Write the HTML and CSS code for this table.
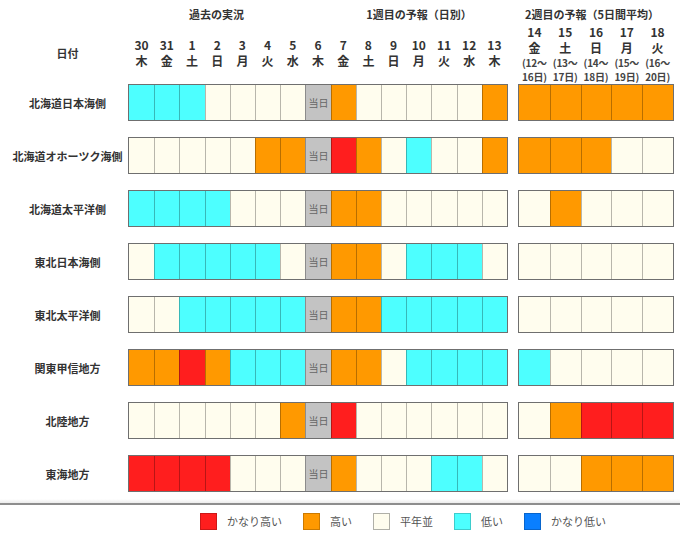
FILE: index.html
```html
<!DOCTYPE html>
<html lang="ja">
<head>
<meta charset="utf-8">
<link rel="stylesheet" href="styles.css">
</head>
<body>
<div class="chart">
  <div class="head">
    <div class="label head-label">日付</div>
    <div class="w1head">
      <div class="titles">
        <div class="t-past">過去の実況</div>
        <div class="t-w1">1週目の予報（日別）</div>
      </div>
      <div class="dates w1dates">
        <div class="d"><b>30</b><b>木</b></div>
        <div class="d"><b>31</b><b>金</b></div>
        <div class="d"><b>1</b><b>土</b></div>
        <div class="d"><b>2</b><b>日</b></div>
        <div class="d"><b>3</b><b>月</b></div>
        <div class="d"><b>4</b><b>火</b></div>
        <div class="d"><b>5</b><b>水</b></div>
        <div class="d"><b>6</b><b>木</b></div>
        <div class="d"><b>7</b><b>金</b></div>
        <div class="d"><b>8</b><b>土</b></div>
        <div class="d"><b>9</b><b>日</b></div>
        <div class="d"><b>10</b><b>月</b></div>
        <div class="d"><b>11</b><b>火</b></div>
        <div class="d"><b>12</b><b>水</b></div>
        <div class="d"><b>13</b><b>木</b></div>
      </div>
    </div>
    <div class="w2head">
      <div class="t-w2">2週目の予報（5日間平均）</div>
      <div class="dates w2dates">
        <div class="d"><b>14</b><b>金</b><span>(12～</span><span>16日)</span></div>
        <div class="d"><b>15</b><b>土</b><span>(13～</span><span>17日)</span></div>
        <div class="d"><b>16</b><b>日</b><span>(14～</span><span>18日)</span></div>
        <div class="d"><b>17</b><b>月</b><span>(15～</span><span>19日)</span></div>
        <div class="d"><b>18</b><b>火</b><span>(16～</span><span>20日)</span></div>
      </div>
    </div>
  </div>

  <div class="row">
    <div class="label">北海道日本海側</div>
    <div class="bar w1"><i class="c"></i><i class="c"></i><i class="c"></i><i class="n"></i><i class="n"></i><i class="n"></i><i class="n"></i><i class="t">当日</i><i class="o"></i><i class="n"></i><i class="n"></i><i class="n"></i><i class="n"></i><i class="n"></i><i class="o"></i></div>
    <div class="bar w2"><i class="o"></i><i class="o"></i><i class="o"></i><i class="o"></i><i class="o"></i></div>
  </div>
  <div class="row">
    <div class="label">北海道オホーツク海側</div>
    <div class="bar w1"><i class="n"></i><i class="n"></i><i class="n"></i><i class="n"></i><i class="n"></i><i class="o"></i><i class="o"></i><i class="t">当日</i><i class="r"></i><i class="o"></i><i class="n"></i><i class="c"></i><i class="n"></i><i class="n"></i><i class="o"></i></div>
    <div class="bar w2"><i class="o"></i><i class="o"></i><i class="o"></i><i class="n"></i><i class="n"></i></div>
  </div>
  <div class="row">
    <div class="label">北海道太平洋側</div>
    <div class="bar w1"><i class="c"></i><i class="c"></i><i class="c"></i><i class="c"></i><i class="n"></i><i class="n"></i><i class="n"></i><i class="t">当日</i><i class="o"></i><i class="o"></i><i class="n"></i><i class="n"></i><i class="n"></i><i class="n"></i><i class="n"></i></div>
    <div class="bar w2"><i class="n"></i><i class="o"></i><i class="n"></i><i class="n"></i><i class="n"></i></div>
  </div>
  <div class="row">
    <div class="label">東北日本海側</div>
    <div class="bar w1"><i class="n"></i><i class="c"></i><i class="c"></i><i class="c"></i><i class="c"></i><i class="c"></i><i class="n"></i><i class="t">当日</i><i class="o"></i><i class="o"></i><i class="n"></i><i class="c"></i><i class="c"></i><i class="c"></i><i class="n"></i></div>
    <div class="bar w2"><i class="n"></i><i class="n"></i><i class="n"></i><i class="n"></i><i class="n"></i></div>
  </div>
  <div class="row">
    <div class="label">東北太平洋側</div>
    <div class="bar w1"><i class="n"></i><i class="n"></i><i class="c"></i><i class="c"></i><i class="c"></i><i class="c"></i><i class="c"></i><i class="t">当日</i><i class="o"></i><i class="o"></i><i class="c"></i><i class="c"></i><i class="c"></i><i class="c"></i><i class="c"></i></div>
    <div class="bar w2"><i class="n"></i><i class="n"></i><i class="n"></i><i class="n"></i><i class="n"></i></div>
  </div>
  <div class="row">
    <div class="label">関東甲信地方</div>
    <div class="bar w1"><i class="o"></i><i class="o"></i><i class="r"></i><i class="o"></i><i class="c"></i><i class="c"></i><i class="c"></i><i class="t">当日</i><i class="o"></i><i class="o"></i><i class="n"></i><i class="c"></i><i class="c"></i><i class="c"></i><i class="c"></i></div>
    <div class="bar w2"><i class="c"></i><i class="n"></i><i class="n"></i><i class="n"></i><i class="n"></i></div>
  </div>
  <div class="row">
    <div class="label">北陸地方</div>
    <div class="bar w1"><i class="n"></i><i class="n"></i><i class="n"></i><i class="n"></i><i class="n"></i><i class="n"></i><i class="o"></i><i class="t">当日</i><i class="r"></i><i class="n"></i><i class="n"></i><i class="n"></i><i class="n"></i><i class="n"></i><i class="n"></i></div>
    <div class="bar w2"><i class="n"></i><i class="o"></i><i class="r"></i><i class="r"></i><i class="r"></i></div>
  </div>
  <div class="row">
    <div class="label">東海地方</div>
    <div class="bar w1"><i class="r"></i><i class="r"></i><i class="r"></i><i class="r"></i><i class="n"></i><i class="n"></i><i class="n"></i><i class="t">当日</i><i class="o"></i><i class="n"></i><i class="n"></i><i class="n"></i><i class="c"></i><i class="c"></i><i class="n"></i></div>
    <div class="bar w2"><i class="n"></i><i class="n"></i><i class="o"></i><i class="o"></i><i class="o"></i></div>
  </div>
</div>

<div class="sep"></div>

<div class="legend">
  <div class="li"><i class="sw r"></i><span>かなり高い</span></div>
  <div class="li"><i class="sw o"></i><span>高い</span></div>
  <div class="li"><i class="sw n"></i><span>平年並</span></div>
  <div class="li"><i class="sw c"></i><span>低い</span></div>
  <div class="li"><i class="sw b"></i><span>かなり低い</span></div>
</div>
</body>
</html>
```

FILE: styles.css
```css
* { box-sizing: border-box; }
html, body {
  margin: 0;
  padding: 0;
  background: #ffffff;
}
body {
  width: 680px;
  height: 540px;
  overflow: hidden;
  font-family: "Noto Sans CJK JP", "Noto Sans", sans-serif;
  color: #333333;
}
.chart {
  padding-left: 7px;
}
.head {
  display: flex;
  height: 84px;
}
.label {
  width: 121px;
  flex: none;
  text-align: center;
  font-size: 11px;
  font-weight: bold;
  color: #333333;
  display: flex;
  align-items: center;
  justify-content: center;
  letter-spacing: 0;
}
.head-label {
  align-items: flex-start;
  padding-top: 45px;
  line-height: 16px;
  height: 84px;
}
.w1head {
  width: 380px;
  flex: none;
}
.titles {
  display: flex;
  margin-top: 4px;
  height: 20px;
  line-height: 20px;
  font-size: 11px;
  font-weight: bold;
}
.t-past {
  width: 177px;
  text-align: center;
}
.t-w1 {
  width: 178px;
  margin-left: 25px;
  text-align: center;
}
.dates {
  display: grid;
}
.w1dates {
  grid-template-columns: repeat(15, 1fr);
  margin-top: 13px;
  padding: 0 1px;
}
.d {
  display: flex;
  flex-direction: column;
  align-items: center;
  text-align: center;
  white-space: nowrap;
}
.d b {
  display: block;
  font-size: 12px;
  line-height: 16px;
  font-weight: bold;
  color: #333333;
}
.d span {
  display: block;
  font-size: 10px;
  line-height: 14px;
  font-weight: bold;
  color: #444444;
  letter-spacing: -0.2px;
}
.w2head {
  width: 156px;
  flex: none;
  margin-left: 10px;
}
.t-w2 {
  margin-top: 4px;
  height: 20px;
  line-height: 20px;
  font-size: 11px;
  font-weight: bold;
  text-align: center;
  white-space: nowrap;
  margin-left: -6px;
  margin-right: 2px;
}
.w2dates {
  grid-template-columns: repeat(5, 1fr);
  padding: 0 1px;
}

.row {
  display: flex;
  height: 37px;
  margin-bottom: 16px;
}
.row:last-child {
  margin-bottom: 0;
}
.bar {
  display: grid;
  flex: none;
  height: 37px;
  border: 1px solid #6f6f6f;
}
.bar.w1 {
  width: 380px;
  grid-template-columns: repeat(15, 1fr);
}
.bar.w2 {
  width: 156px;
  margin-left: 10px;
  grid-template-columns: repeat(5, 1fr);
}
.bar i {
  display: flex;
  align-items: center;
  justify-content: center;
  font-style: normal;
  border-left: 1px solid rgba(0, 0, 0, 0.28);
}
.bar i:first-child {
  border-left: none;
}
.r { background: #ff1e1e; }
.o { background: #ff9900; }
.n { background: #fffdee; }
.c { background: #4dffff; }
.b { background: #0a7fff; }
.bar i.t {
  background: #c3c3c3;
  color: #666666;
  font-size: 10px;
}

.sep {
  margin-top: 7px;
  height: 6px;
  border-bottom: 2px solid #8e8e8e;
  background: linear-gradient(#ffffff, #ececec);
}
.legend {
  display: flex;
  align-items: center;
  padding-left: 200px;
  margin-top: 7px;
  height: 18px;
}
.li {
  display: flex;
  align-items: center;
  margin-right: 21px;
}
.sw {
  display: block;
  width: 17px;
  height: 17px;
  border: 1px solid rgba(0, 0, 0, 0.2);
  margin-right: 10px;
}
.sw.n {
  border-color: #b0b0a8;
}
.li span {
  font-size: 11px;
  color: #555555;
  line-height: 18px;
}
```
